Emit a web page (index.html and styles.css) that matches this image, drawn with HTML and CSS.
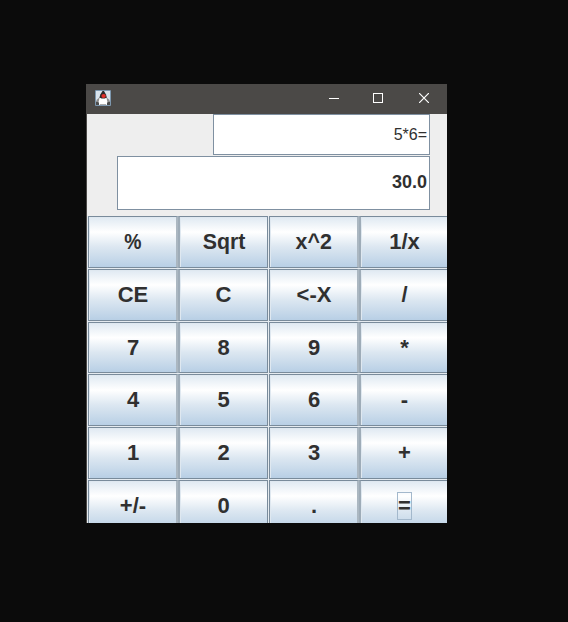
FILE: index.html
```html
<!DOCTYPE html>
<html lang="en">
<head>
<meta charset="utf-8">
<title>Calculator</title>
<link rel="stylesheet" href="styles.css">
</head>
<body>
<main class="window">
  <header class="titlebar">
    <svg class="logo" width="16" height="16" viewBox="0 0 16 16">
      <rect width="16" height="16" rx="1" fill="#7d97ae"/>
      <rect x="1" y="1" width="14" height="14" fill="#d9e3ec"/>
      <path d="M5 7L1.500 10v3L5 12zM11 7l3.500 3v3L11 12z" fill="#8d8d8d"/>
      <path d="M4.500 8h7l1.500 6.500H3z" fill="#fff"/>
      <path d="M7.500 1h1.500l2 3.500.8 3-2 1H6.500l-2-1 .8-3z" fill="#2a2a2a"/>
      <ellipse cx="8.600" cy="6" rx="2.200" ry="1.900" fill="#e2302a"/>
      <path d="M1 11.500l3 1V15H1zM15 11.500l-3 1V15h3z" fill="#4c4c4c"/>
      <path d="M5 14.500h6" stroke="#aaa"/>
    </svg>
    <div class="controls">
      <svg width="10" height="10"><path d="M0 5.500h10" stroke="#fff"/></svg>
      <svg class="maximize" width="10" height="10"><rect x=".5" y=".5" width="9" height="9" fill="none" stroke="#fff"/></svg>
      <svg width="10" height="10"><path d="M0 0l10 10M10 0L0 10" stroke="#fff" stroke-width="1.200"/></svg>
    </div>
  </header>
  <section class="displays">
    <div class="display history">5*6=</div>
    <div class="display result">30.0</div>
  </section>
  <section class="keys">
    <button><span class="percent">%</span></button><button><span class="tight">Sqrt</span></button><button><span class="tight">x^2</span></button><button>1/x</button>
    <button>CE</button><button>C</button><button><span>&lt;-X</span></button><button>/</button>
    <button>7</button><button>8</button><button>9</button><button>*</button>
    <button>4</button><button>5</button><button>6</button><button>-</button>
    <button>1</button><button>2</button><button>3</button><button>+</button>
    <button>+/-</button><button>0</button><button>.</button><button><span class="focus">=</span></button>
  </section>
</main>
</body>
</html>
```
FILE: styles.css
```css
* { box-sizing: border-box; }
body {
  margin: 0;
  height: 622px;
  padding: 84px 0 0 86px;
  background: #0b0b0b;
  overflow: hidden;
  font-family: "Liberation Sans", Arial, sans-serif;
  color: #303030;
}
.window {
  width: 361px;
  height: 439px;
  overflow: hidden;
  background: #eee;
  border-left: 1px solid #4b4947;
}
.titlebar {
  height: 30px;
  padding: 0 18px 2px 8px;
  background: #4b4947;
  display: flex;
  align-items: center;
  justify-content: space-between;
}
.logo { display: block; }
.controls { display: flex; gap: 35px; }
.controls svg { display: block; }
.controls .maximize { margin: 0 1px 0 -1px; }
.displays {
  height: 102px;
  padding-right: 17px;
  display: flex;
  flex-direction: column;
  align-items: flex-end;
  gap: 1px;
}
.display {
  display: flex;
  align-items: center;
  justify-content: flex-end;
  background: #fff;
  border: 1px solid #7f90a1;
  padding-right: 2px;
}
.history { width: 217px; height: 41px; font-size: 16px; }
.result {
  width: 313px;
  height: 54px;
  padding-bottom: 1px;
  font-size: 18px;
  font-weight: bold;
}
.keys {
  width: 363px;
  padding-left: 1px;
  display: grid;
  grid-template-columns: 90px 90px 90px 90px;
  grid-template-rows: 52px 52px 51px 52px 52px 52px;
  row-gap: 1px;
  background: #e5ebf0;
}
.keys button {
  margin: 0;
  padding: 0 0 0 1px;
  display: flex;
  align-items: center;
  justify-content: center;
  border: 1px solid #798b9b;
  box-shadow: inset 1px 1px #dfe8f0;
  background: linear-gradient(#dfe9f2 0%, #fff 30%, #dce7f1 60%, #b8cfe5 100%);
  font: bold 22px "Liberation Sans", Arial, sans-serif;
  color: #303030;
}
.keys button:nth-child(4n + 1),
.keys button:nth-child(4n + 3) { border-right: 2px solid #abb7c1; }
.keys button:nth-child(4n + 2) { border-left: 2px solid #9eacb8; padding-left: 0; }
.keys button:nth-child(4n) { border-left: 2px solid #9eacb8; padding-left: 0; }
.keys button:nth-child(4n + 3),
.keys button:nth-child(4n) { margin-left: 1px; margin-right: -1px; }
.percent { transform: scaleX(.88); }
.tight { transform: scaleX(.97); }
.focus {
  width: 15px;
  height: 28px;
  display: flex;
  align-items: center;
  justify-content: center;
  border: 1px solid #a3b8cc;
}
```
